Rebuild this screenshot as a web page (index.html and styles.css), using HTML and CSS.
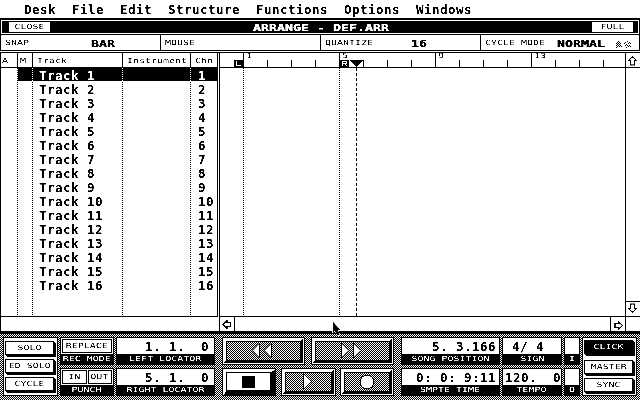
FILE: index.html
```html
<!DOCTYPE html>
<html lang="en">
<head>
<meta charset="utf-8">
<title>Arrange - DEF.ARR</title>
<link rel="stylesheet" href="styles.css">
</head>
<body>
<div class="screen">
<nav class="menu"><span>Desk</span><span>File</span><span>Edit</span><span>Structure</span><span>Functions</span><span>Options</span><span>Windows</span></nav>
<header class="title"><div class="titlebar"><div class="tbtn close"><span class="s">CLOSE</span></div><span class="m">ARRANGE - DEF.ARR</span><div class="tbtn full"><span class="s">FULL</span></div></div></header>
<section class="info">
<div class="snap"><span class="s">SNAP</span><span class="m">BAR</span></div>
<div class="mouse"><span class="s">MOUSE</span></div>
<div class="quant"><span class="s">QUANTIZE</span><span class="m">16</span></div>
<div class="cmode"><span class="s">CYCLE MODE</span><span class="m">NORMAL</span>
<svg class="marks" width="16" height="8" viewBox="0 0 16 8" shape-rendering="crispEdges"><path d="M2 0h1v1h-1zM1 1h1v1h-1zM3 1h1v1h-1zM0 2h1v1h-1zM2 2h1v1h-1zM4 2h1v1h-1zM1 3h1v1h-1zM3 3h1v1h-1zM0 4h1v1h-1zM4 4h1v1h-1zM1 5h1v1h-1zM3 5h1v1h-1zM0 6h1v1h-1zM2 4h1v1h-1zM5 5h1v1h-1zM9 1h1v1h-1zM11 0h1v1h-1zM13 1h1v1h-1zM8 2h1v1h-1zM10 3h1v1h-1zM12 2h1v1h-1zM14 2h1v1h-1zM9 4h1v1h-1zM11 4h1v1h-1zM13 4h1v1h-1zM10 6h1v1h-1zM12 5h1v1h-1zM14 5h1v1h-1z"/></svg></div>
</section>
<main class="work">
<section class="list">
<div class="thead"><div><span class="s">A</span></div><div><span class="s">M</span></div><div><span class="s">Track</span></div><div><span class="s">Instrument</span></div><div><span class="s">Chn</span></div></div>
<div class="rows" id="rows"></div>
<div class="listfoot"></div>
</section>
<section class="arrange">
<div class="ruler" id="ruler">
<svg class="locs" width="130" height="8" viewBox="0 0 130 8" shape-rendering="crispEdges"><path d="M14 0h9v7h-9zM119 0h10v7h-10z"/><path d="M16 1h1v4h4v1h-5zM122 1h5v3h-1v1h1v1h-1v-1h-1v-1h-2v2h-1zM123 2v1h3v-1z" fill="#fff" fill-rule="evenodd"/></svg>
<svg class="song" width="13" height="7" viewBox="0 0 13 7" shape-rendering="crispEdges"><path d="M0 0h13L6.5 7z"/></svg>
</div>
<div class="canvas"><i class="dots l"></i><i class="dots r"></i><i class="dash"></i></div>
<div class="hscroll"><div class="arrow"><svg width="10" height="9" viewBox="0 0 10 9"><path d="M5 .5L1 4.5L5 8.5V6.5H8.5V2.5H5Z" class="ar"/></svg></div><div class="arrow right"><svg width="10" height="9" viewBox="0 0 10 9"><path d="M4.500 .5L8.500 4.500L4.500 8.500V6.500H1V2.500H4.500Z" class="ar"/></svg></div></div>
</section>
<aside class="vscroll"><div class="up"><svg width="9" height="10" viewBox="0 0 9 10"><path d="M.5 4.500L4.500 .5L8.500 4.500H6.500V9H2.500V4.500Z" class="ar"/></svg></div><div class="down"><svg width="9" height="10" viewBox="0 0 9 10"><path d="M.5 5.500L4.500 9.500L8.500 5.500H6.500V1H2.500V5.500Z" class="ar"/></svg></div></aside>
</main>
<footer class="transport">
<div class="side left"><div class="btn"><span class="s">SOLO</span></div><div class="btn"><span class="s">ED SOLO</span></div><div class="btn"><span class="s">CYCLE</span></div></div>
<div class="col recs">
<div class="box"><div class="val frames"><b><span class="s">REPLACE</span></b></div><div class="lab"><span class="s">REC MODE</span></div></div>
<div class="box"><div class="val frames"><b><span class="s">IN</span></b><b><span class="s">OUT</span></b></div><div class="lab"><span class="s">PUNCH</span></div></div>
</div>
<div class="col locators">
<div class="box"><div class="val">1. 1.  0</div><div class="lab"><span class="s">LEFT LOCATOR</span></div></div>
<div class="box"><div class="val">5. 1.  0</div><div class="lab"><span class="s">RIGHT LOCATOR</span></div></div>
</div>
<div class="keys">
<div class="keyrow top"><div class="key"><div><svg width="22" height="17" viewBox="0 0 22 17"><path d="M8.500 1v15L1 8.500zM20.500 1v15L13 8.500z" class="tri"/></svg></div></div><div class="key"><div><svg width="22" height="17" viewBox="0 0 22 17"><path d="M1.500 1v15L9 8.500zM13.500 1v15L21 8.500z" class="tri"/></svg></div></div></div>
<div class="keyrow bot"><div class="key stop"><div><i></i></div></div><div class="key"><div><svg width="12" height="17" viewBox="0 0 12 17"><path d="M1.500 .5v16L10 8.500z" class="tri"/></svg></div></div><div class="key"><div><svg width="16" height="16" viewBox="0 0 16 16"><circle cx="8" cy="8" r="7" class="tri"/></svg></div></div></div>
</div>
<div class="col songs">
<div class="box"><div class="val">5. 3.166</div><div class="lab"><span class="s">SONG POSITION</span></div></div>
<div class="box"><div class="val">0: 0: 9:11</div><div class="lab"><span class="s">SMPTE TIME</span></div></div>
</div>
<div class="col tempo">
<div class="box"><div class="val sign">4/ 4</div><div class="lab"><span class="s">SIGN</span></div></div>
<div class="box"><div class="val">120.  0</div><div class="lab"><span class="s">TEMPO</span></div></div>
</div>
<div class="col io">
<div class="box"><div class="val"></div><div class="lab"><span class="s">I</span></div></div>
<div class="box"><div class="val"></div><div class="lab"><span class="s">O</span></div></div>
</div>
<div class="side right"><div class="btn on"><span class="s">CLICK</span></div><div class="btn"><span class="s">MASTER</span></div><div class="btn"><span class="s">SYNC</span></div></div>
</footer>
<svg class="pointer" width="10" height="16" viewBox="0 0 10 16"><path d="M.5 0V12L3 10L5 15L8 14L6 9H9Z" stroke="#fff" stroke-width=".6"/></svg>
</div>
<script src="script.js"></script>
</body>
</html>
```
FILE: styles.css
```css
* { box-sizing: border-box; }
body { margin: 0; background: #fff; }
.screen { position: relative; width: 640px; height: 400px; overflow: hidden; display: flex; flex-direction: column; background: #fff; color: #000; font: bold 12.5px/14px "DejaVu Sans Mono", monospace; letter-spacing: .475px; white-space: pre; filter: grayscale(1) contrast(4); }
.screen svg { display: block; flex: none; }
nav, header, section, main, footer, aside, .rows, .row, .thead, .col, .box, .side, .keys, .keyrow, .ruler, .hscroll, .info div { white-space: normal; }
.s { display: inline-block; white-space: pre; font-weight: normal; font-size: 7px; line-height: 8px; letter-spacing: 0; transform: scaleX(1.424); }
.m { display: inline-block; white-space: pre; font-weight: bold; font-size: 9px; line-height: 10px; letter-spacing: 0; transform: scaleX(1.476); -webkit-text-stroke: .2px currentColor; }

.menu { height: 18px; flex: none; display: flex; gap: 16px; padding: 3px 0 0 24px; }
.title { flex: none; height: 17px; border: 1px solid #000; border-top-width: 2px; padding: 1px; }
.titlebar { height: 12px; background: #000; color: #fff; display: flex; align-items: center; justify-content: space-between; padding: 0 5px 0 7px; }
.titlebar .m { position: relative; left: 0; top: 1px; }
.tbtn { height: 10px; background: #fff; color: #000; display: flex; justify-content: center; align-items: center; }
.close { width: 41px; }
.full { width: 41px; }

.info { flex: none; height: 16px; display: flex; border: 1px solid #000; border-top: 0; }
.info > div { display: flex; align-items: center; border-right: 1px solid #000; padding-left: 4px; }
.info > div:last-child { border-right: 0; }
.info .s, .info .m { transform-origin: left; }
.info .m { position: relative; top: 1px; }
.snap { width: 160px; }
.snap .m { margin-left: 69px; }
.mouse { width: 160px; }
.quant { width: 160px; }
.quant .m { margin-left: 52px; }
.cmode { flex: 1; }
.cmode .m { margin-left: 30px; }
.marks { margin-left: 26px; position: relative; top: 2px; }

.work { flex: none; height: 279px; display: flex; border-top: 1px solid #000; margin-top: 1px; }
.list { width: 218px; display: flex; flex-direction: column; border-left: 1px solid #000; }
.thead, .row { display: grid; grid-template-columns: 17px 15px 90px 68px 27px; }
.thead { height: 15px; border-bottom: 1px solid #000; }
.thead > div { border-right: 1px solid #000; padding: 4px 0 0 4px; display: flex; }
.thead > div:first-child { padding-left: 1px; }
.thead > div:nth-child(2) { padding-left: 2px; }
.thead .s { transform-origin: left; }
.rows { height: 249px; border-bottom: 1px solid #000; border-right: 1px solid #000; display: flex; flex-direction: column; }
.row { height: 14px; flex: none; }
.row.fill { flex: 1; }
.row > div { background: repeating-linear-gradient(#000 0 1px, #fff 1px 2px) right top / 1px 100% no-repeat; padding-left: 6px; line-height: 15px; white-space: pre; }
.row > div:last-child { background: none; padding-left: 7px; }
.row.sel > div:not(:first-child) { background: repeating-linear-gradient(#fff 0 1px, #000 1px 2px) right top / 1px 13px no-repeat, linear-gradient(#000, #000) 0 0 / 100% 13px no-repeat; color: #fff; }
.row.sel > div:last-child { background: linear-gradient(#000, #000) 0 0 / 100% 13px no-repeat; }

.arrange { width: 406px; margin-left: 1px; border-left: 1px solid #000; display: flex; flex-direction: column; }
.ruler { position: relative; height: 15px; border-bottom: 1px solid #000; display: flex; align-items: flex-end; padding-left: 23px; }
.tick { width: 24px; height: 7px; flex: none; border-left: 1px solid #000; }
.tick.bar { height: 14px; padding-left: 2px; }
.tick .s { transform-origin: left; display: block; margin-top: -1px; }
.locs { position: absolute; left: 0; top: 7px; }
.song { position: absolute; left: 130px; top: 7px; }
.canvas { position: relative; height: 249px; border-bottom: 1px solid #000; }
.dots, .dash { position: absolute; top: 0; bottom: 0; width: 1px; background: repeating-linear-gradient(#000 0 1px, #fff 1px 2px); }
.dots.l { left: 23px; }
.dots.r { left: 119px; }
.dash { left: 136px; background: repeating-linear-gradient(#000 0 3px, #fff 3px 5px); }
.hscroll { height: 14px; display: flex; justify-content: space-between; }
.arrow { width: 15px; border-right: 1px solid #000; display: flex; align-items: center; padding-left: 2px; }
.arrow.right { width: 15px; border-right: 0; border-left: 1px solid #000; padding-left: 3px; }
.ar { fill: #fff; stroke: #000; stroke-width: 1.2; }
.vscroll { width: 15px; height: 264px; border-left: 1px solid #000; border-bottom: 1px solid #000; display: flex; flex-direction: column; justify-content: space-between; position: relative; }
.vscroll::after { content: ""; position: absolute; left: -1px; top: 100%; width: 1px; height: 15px; background: #000; }
.up { height: 15px; padding: 3px 0 0 2px; border-bottom: 1px solid #000; }
.down { height: 15px; border-top: 1px solid #000; padding: 1px 0 0 2px; }

.transport { flex: none; height: 69px; border-top: 3px solid #000; padding: 3px 3px 0; display: flex; align-items: flex-start; background: repeating-conic-gradient(#000 0 25%, #fff 0 50%) 0 0 / 2px 2px; }
.side { width: 55px; height: 59px; border: 1px solid #000; background: #fff; padding: 3px 0 0 1px; display: flex; flex-direction: column; gap: 4px; }
.btn { width: 49px; height: 14px; flex: none; border: 1px solid #000; background: #fff; box-shadow: 1px 1px #000, 2px 2px #000; display: flex; justify-content: center; align-items: center; }
.btn.on { background: #000; color: #fff; margin-bottom: 2px; }
.right { margin-left: 2px; padding-top: 2px; }
.col { display: flex; flex-direction: column; gap: 3px; }
.box { height: 28px; border: 1px solid #000; background: #fff; display: flex; flex-direction: column; }
.val { height: 16px; padding-right: 5px; text-align: right; line-height: 18px; white-space: pre; }
.lab { flex: 1; background: #000; color: #fff; display: flex; justify-content: center; align-items: center; }
.recs { width: 54px; margin-left: 2px; }
.frames { display: flex; gap: 1px; padding: 1px; }
.frames b { flex: 1; border: 1px solid #000; display: flex; justify-content: center; align-items: center; }
.locators { width: 99px; margin-left: 2px; }
.songs { width: 99px; margin-left: 7px; }
.songs .val { padding-right: 3px; }
.tempo { width: 60px; margin-left: 2px; }
.tempo .val { padding-right: 0; }
.tempo .sign { padding-right: 17px; }
.io { width: 16px; margin-left: 2px; }
.keys { width: 172px; margin-left: 7px; display: flex; flex-direction: column; gap: 3px; }
.keyrow { height: 28px; display: flex; justify-content: space-between; }
.key { width: 83px; border: 1px solid #000; background: #fff; padding: 1px; display: flex; }
.key > div { flex: 1; border: 3px solid; border-color: #fff #000 #000 #fff; border-width: 2px 3px 3px 2px; background: repeating-conic-gradient(#000 0 25%, #fff 0 50%) 0 0 / 2px 2px; box-shadow: inset 1px 1px #000; display: flex; align-items: center; justify-content: center; }
.top .key:first-child > div { padding-right: 2px; }
.top .key:last-child > div { padding-right: 3px; }
.bot .key { width: 54px; }
.bot .key:nth-child(2) { width: 55px; }
.key.stop > div { background: #fff; border-width: 2px 4px 4px 2px; box-shadow: inset 0 0 0 1px #000; }
.key.stop { padding: 1px 0 0 1px; }
.stop i { width: 13px; height: 12px; background: #000; }
.tri { fill: #fff; stroke: #000; }
.pointer { position: absolute; left: 332px; top: 321px; }
```
FILE: script.js
```js
const rows = document.getElementById('rows');
for (let n = 1; n <= 17; n++) {
  const row = document.createElement('div');
  row.className = 'row' + (n === 1 ? ' sel' : '') + (n === 17 ? ' fill' : '');
  const cells = n === 17 ? ['', '', '', '', ''] : ['', '', 'Track ' + n, '', String(n)];
  for (const text of cells) {
    const cell = document.createElement('div');
    cell.textContent = text;
    row.append(cell);
  }
  rows.append(row);
}

const ruler = document.getElementById('ruler');
for (let bar = 1; bar <= 16; bar++) {
  const tick = document.createElement('div');
  tick.className = 'tick';
  if (bar % 4 === 1) {
    tick.className = 'tick bar';
    const label = document.createElement('span');
    label.className = 's';
    label.textContent = bar;
    tick.append(label);
  }
  ruler.append(tick);
}
```
